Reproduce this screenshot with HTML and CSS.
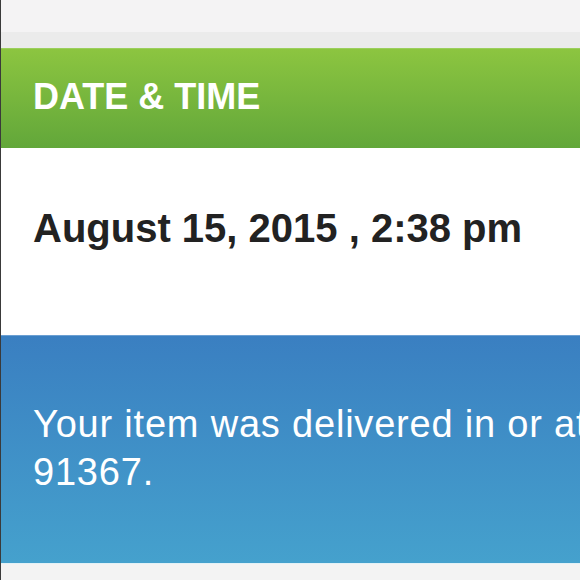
FILE: index.html
```html
<!DOCTYPE html>
<html lang="en">
<head>
<meta charset="utf-8">
<title>Date &amp; Time</title>
<link rel="stylesheet" href="styles.css">
</head>
<body>
<div class="page">
  <div class="top-bar"></div>
  <div class="top-strip"></div>
  <section class="card">
    <header class="card-header">
      <h2 class="card-title">DATE &amp; TIME</h2>
    </header>
    <div class="card-body">
      <p class="date-text">August 15, 2015 , 2:38 pm</p>
    </div>
    <div class="status">
      <p class="status-text">Your item was delivered in or at the mailbox at<br>91367.</p>
    </div>
  </section>
  <div class="bottom-bar"></div>
</div>
</body>
</html>
```
FILE: styles.css
```css
html, body {
  margin: 0;
  padding: 0;
  overflow: hidden;
  background: #f3f3f3;
}
.page {
  width: 580px;
  height: 580px;
  overflow: hidden;
  border-left: 1px solid #3a3a3a;
  box-sizing: border-box;
  font-family: "Liberation Sans", Arial, sans-serif;
  display: flex;
  flex-direction: column;
}
.top-bar {
  height: 32px;
  background: #f4f3f4;
  flex: none;
}
.top-strip {
  height: 16px;
  background: #ebebeb;
  flex: none;
}
.card {
  flex: none;
  display: flex;
  flex-direction: column;
}
.card-header {
  height: 100px;
  box-sizing: border-box;
  border-top: 1px solid #9bcf5c;
  background: linear-gradient(to bottom, #8cc540 0%, #62a73a 100%);
  display: flex;
  align-items: center;
  padding-left: 32px;
}
.card-title {
  margin: 0;
  color: #ffffff;
  font-size: 36px;
  font-weight: bold;
  line-height: 40px;
  margin-top: -4px;
}
.card-body {
  height: 187px;
  box-sizing: border-box;
  background: #ffffff;
  padding: 57px 0 0 32px;
}
.date-text {
  margin: 0;
  font-size: 40px;
  line-height: 46px;
  font-weight: bold;
  color: #222222;
  white-space: nowrap;
}
.status {
  height: 228px;
  box-sizing: border-box;
  border-top: 1px solid #6b9fd2;
  background: linear-gradient(to bottom, #3a7fc1 0%, #45a1cd 100%);
  padding: 64px 0 0 32px;
}
.status-text {
  margin: 0;
  font-size: 38px;
  line-height: 48px;
  letter-spacing: 0.8px;
  color: #ffffff;
  white-space: nowrap;
}
.bottom-bar {
  flex: 1;
  border-top: 1px solid #e2f1f6;
  background: #f3f3f3;
}
```
